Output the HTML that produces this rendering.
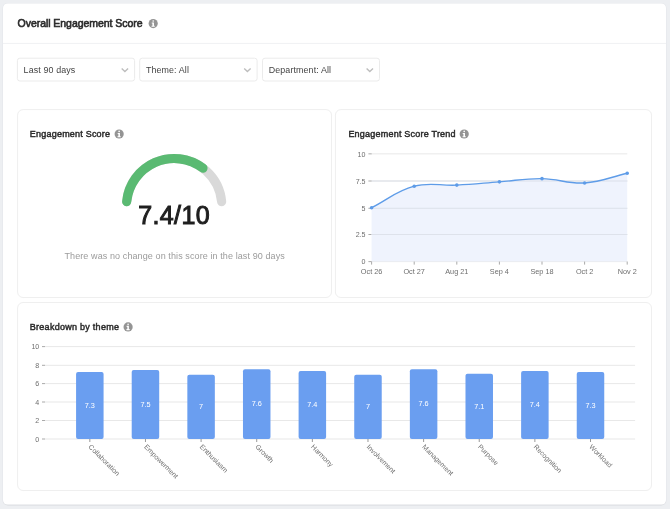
<!DOCTYPE html>
<html><head><meta charset="utf-8"><style>html,body{margin:0;padding:0;background:#edeff2;overflow:hidden}svg{display:block;will-change:transform}</style></head>
<body><svg width="670" height="509" viewBox="0 0 670 509"><rect x="0" y="0" width="670" height="509" fill="#edeff2"/><rect x="2.5" y="3.0" width="664" height="502.5" rx="5" fill="#e4e6ea"/><rect x="3" y="4.3" width="663" height="501.2" rx="5" fill="#dcdee2"/><rect x="3" y="3.5" width="663" height="501" rx="4.5" fill="#fff"/><text x="17.6" y="27.4" font-family='"Liberation Sans", sans-serif' font-size="10.5" letter-spacing="-0.05" fill="#2a2a2a" stroke="#2a2a2a" stroke-width="0.6">Overall Engagement Score</text><circle cx="153.2" cy="23.55" r="4.6" fill="#949494"/><circle cx="153.2" cy="21.00531914893617" r="0.8319148936170211" fill="#fff"/><path d="M151.73191489361702 22.47340425531915 h2.2510638297872334 v3.2297872340425524 h0.7829787234042552 v1.076595744680851 h-3.2297872340425524 v-1.076595744680851 h0.8808510638297872 v-2.153191489361702 h-0.6851063829787233 z" fill="#fff"/><rect x="3" y="42.9" width="663" height="1" fill="#f0f1f3"/><rect x="17.4" y="58.2" width="117.19999999999999" height="22.8" rx="2.5" fill="#fff" stroke="#ebebeb" stroke-width="1"/><text x="23.599999999999998" y="72.9" font-family='"Liberation Sans", sans-serif' font-size="8.9" letter-spacing="0.12" fill="#444">Last 90 days</text><path d="M121.69999999999999 68.6 L124.89999999999999 71.6 L128.1 68.6" fill="none" stroke="#bdbdbd" stroke-width="1.4"/><rect x="139.7" y="58.2" width="117.40000000000003" height="22.8" rx="2.5" fill="#fff" stroke="#ebebeb" stroke-width="1"/><text x="145.89999999999998" y="72.9" font-family='"Liberation Sans", sans-serif' font-size="8.9" letter-spacing="0.12" fill="#444">Theme: All</text><path d="M244.20000000000005 68.6 L247.40000000000003 71.6 L250.60000000000002 68.6" fill="none" stroke="#bdbdbd" stroke-width="1.4"/><rect x="262.5" y="58.2" width="117.0" height="22.8" rx="2.5" fill="#fff" stroke="#ebebeb" stroke-width="1"/><text x="268.7" y="72.9" font-family='"Liberation Sans", sans-serif' font-size="8.9" letter-spacing="0.12" fill="#444">Department: All</text><path d="M366.6 68.6 L369.8 71.6 L373.0 68.6" fill="none" stroke="#bdbdbd" stroke-width="1.4"/><rect x="17.6" y="109.6" width="313.9" height="187.9" rx="5.5" fill="#fff" stroke="#efefef" stroke-width="1"/><rect x="335.4" y="109.6" width="316.1" height="187.9" rx="5.5" fill="#fff" stroke="#efefef" stroke-width="1"/><rect x="17.6" y="302.5" width="633.9" height="188.0" rx="5.5" fill="#fff" stroke="#efefef" stroke-width="1"/><text x="29.85" y="137.4" font-family='"Liberation Sans", sans-serif' font-size="9" letter-spacing="0.21" fill="#2a2a2a" stroke="#2a2a2a" stroke-width="0.45">Engagement Score</text><circle cx="119.15" cy="134" r="4.6" fill="#949494"/><circle cx="119.15" cy="131.45531914893618" r="0.8319148936170211" fill="#fff"/><path d="M117.68191489361703 132.92340425531916 h2.2510638297872334 v3.2297872340425524 h0.7829787234042552 v1.076595744680851 h-3.2297872340425524 v-1.076595744680851 h0.8808510638297872 v-2.153191489361702 h-0.6851063829787233 z" fill="#fff"/><text x="348.4" y="137.4" font-family='"Liberation Sans", sans-serif' font-size="9" letter-spacing="0.22" fill="#2a2a2a" stroke="#2a2a2a" stroke-width="0.45">Engagement Score Trend</text><circle cx="464.2" cy="134" r="4.6" fill="#949494"/><circle cx="464.2" cy="131.45531914893618" r="0.8319148936170211" fill="#fff"/><path d="M462.731914893617 132.92340425531916 h2.2510638297872334 v3.2297872340425524 h0.7829787234042552 v1.076595744680851 h-3.2297872340425524 v-1.076595744680851 h0.8808510638297872 v-2.153191489361702 h-0.6851063829787233 z" fill="#fff"/><text x="29.8" y="330" font-family='"Liberation Sans", sans-serif' font-size="9" letter-spacing="0.27" fill="#2a2a2a" stroke="#2a2a2a" stroke-width="0.45">Breakdown by theme</text><circle cx="128.1" cy="326.9" r="4.6" fill="#949494"/><circle cx="128.1" cy="324.35531914893613" r="0.8319148936170211" fill="#fff"/><path d="M126.63191489361702 325.82340425531913 h2.2510638297872334 v3.2297872340425524 h0.7829787234042552 v1.076595744680851 h-3.2297872340425524 v-1.076595744680851 h0.8808510638297872 v-2.153191489361702 h-0.6851063829787233 z" fill="#fff"/><path d="M126.67 201.63 A47.7 47.7 0 0 1 221.63 201.63" fill="none" stroke="#d9d9d9" stroke-width="9.2" stroke-linecap="round"/><path d="M126.67 201.63 A47.7 47.7 0 0 1 202.98 168.20" fill="none" stroke="#5aba72" stroke-width="9.2" stroke-linecap="round"/><text x="174.1" y="224.4" text-anchor="middle" font-family='"Liberation Sans", sans-serif' font-size="25" letter-spacing="0.35" fill="#1f1f1f" stroke="#1f1f1f" stroke-width="1.0">7.4/10</text><text x="174.7" y="259.1" text-anchor="middle" font-family='"Liberation Sans", sans-serif' font-size="9" letter-spacing="0.1" fill="#9b9b9b">There was no change on this score in the last 90 days</text><rect x="371.6" y="153.35" width="255.70" height="1" fill="#e8e8e8"/><rect x="368.4" y="153.35" width="3.3" height="1" fill="#aaa"/><text x="365.5" y="156.70" text-anchor="end" font-family='"Liberation Sans", sans-serif' font-size="7.1" fill="#6e6e6e">10</text><rect x="371.6" y="180.50" width="255.70" height="1" fill="#e8e8e8"/><rect x="368.4" y="180.50" width="3.3" height="1" fill="#aaa"/><text x="365.5" y="183.85" text-anchor="end" font-family='"Liberation Sans", sans-serif' font-size="7.1" fill="#6e6e6e">7.5</text><rect x="371.6" y="207.80" width="255.70" height="1" fill="#e8e8e8"/><rect x="368.4" y="207.80" width="3.3" height="1" fill="#aaa"/><text x="365.5" y="211.15" text-anchor="end" font-family='"Liberation Sans", sans-serif' font-size="7.1" fill="#6e6e6e">5</text><rect x="371.6" y="234.00" width="255.70" height="1" fill="#e8e8e8"/><rect x="368.4" y="234.00" width="3.3" height="1" fill="#aaa"/><text x="365.5" y="237.35" text-anchor="end" font-family='"Liberation Sans", sans-serif' font-size="7.1" fill="#6e6e6e">2.5</text><rect x="371.6" y="261.10" width="255.70" height="1" fill="#e8e8e8"/><rect x="368.4" y="261.10" width="3.3" height="1" fill="#aaa"/><text x="365.5" y="264.45" text-anchor="end" font-family='"Liberation Sans", sans-serif' font-size="7.1" fill="#6e6e6e">0</text><path d="M371.60 207.73 C388.64 199.11 396.19 190.96 414.20 186.18 C430.27 181.91 439.78 185.96 456.80 185.10 C473.86 184.23 482.36 183.16 499.40 181.87 C516.44 180.57 524.98 178.42 542.00 178.63 C559.06 178.85 567.73 184.01 584.60 182.94 C601.81 181.85 610.16 177.12 627.20 173.25 L627.20 261.60 L371.60 261.60 Z" fill="#edf2fd" fill-opacity="0.9"/><rect x="371.6" y="180.50" width="255.70" height="1" fill="#dadfe8" fill-opacity="0.85"/><rect x="371.6" y="207.80" width="255.70" height="1" fill="#dadfe8" fill-opacity="0.85"/><rect x="371.6" y="234.00" width="255.70" height="1" fill="#dadfe8" fill-opacity="0.85"/><path d="M371.60 207.73 C388.64 199.11 396.19 190.96 414.20 186.18 C430.27 181.91 439.78 185.96 456.80 185.10 C473.86 184.23 482.36 183.16 499.40 181.87 C516.44 180.57 524.98 178.42 542.00 178.63 C559.06 178.85 567.73 184.01 584.60 182.94 C601.81 181.85 610.16 177.12 627.20 173.25" fill="none" stroke="#5e9ce8" stroke-width="1.4"/><circle cx="371.60" cy="207.73" r="1.8" fill="#5e9ce8"/><circle cx="414.20" cy="186.18" r="1.8" fill="#5e9ce8"/><circle cx="456.80" cy="185.10" r="1.8" fill="#5e9ce8"/><circle cx="499.40" cy="181.87" r="1.8" fill="#5e9ce8"/><circle cx="542.00" cy="178.63" r="1.8" fill="#5e9ce8"/><circle cx="584.60" cy="182.94" r="1.8" fill="#5e9ce8"/><circle cx="627.20" cy="173.25" r="1.8" fill="#5e9ce8"/><rect x="371.10" y="261.60" width="1" height="3" fill="#aaa"/><text x="371.60" y="274.3" text-anchor="middle" font-family='"Liberation Sans", sans-serif' font-size="7.3" fill="#6e6e6e">Oct 26</text><rect x="413.70" y="261.60" width="1" height="3" fill="#aaa"/><text x="414.20" y="274.3" text-anchor="middle" font-family='"Liberation Sans", sans-serif' font-size="7.3" fill="#6e6e6e">Oct 27</text><rect x="456.30" y="261.60" width="1" height="3" fill="#aaa"/><text x="456.80" y="274.3" text-anchor="middle" font-family='"Liberation Sans", sans-serif' font-size="7.3" fill="#6e6e6e">Aug 21</text><rect x="498.90" y="261.60" width="1" height="3" fill="#aaa"/><text x="499.40" y="274.3" text-anchor="middle" font-family='"Liberation Sans", sans-serif' font-size="7.3" fill="#6e6e6e">Sep 4</text><rect x="541.50" y="261.60" width="1" height="3" fill="#aaa"/><text x="542.00" y="274.3" text-anchor="middle" font-family='"Liberation Sans", sans-serif' font-size="7.3" fill="#6e6e6e">Sep 18</text><rect x="584.10" y="261.60" width="1" height="3" fill="#aaa"/><text x="584.60" y="274.3" text-anchor="middle" font-family='"Liberation Sans", sans-serif' font-size="7.3" fill="#6e6e6e">Oct 2</text><rect x="626.70" y="261.60" width="1" height="3" fill="#aaa"/><text x="627.20" y="274.3" text-anchor="middle" font-family='"Liberation Sans", sans-serif' font-size="7.3" fill="#6e6e6e">Nov 2</text><rect x="44.8" y="346.10" width="590.30" height="1" fill="#e8e8e8"/><rect x="42" y="346.10" width="3" height="1" fill="#aaa"/><text x="39.3" y="349.45" text-anchor="end" font-family='"Liberation Sans", sans-serif' font-size="7.1" fill="#6e6e6e">10</text><rect x="44.8" y="364.80" width="590.30" height="1" fill="#e8e8e8"/><rect x="42" y="364.80" width="3" height="1" fill="#aaa"/><text x="39.3" y="368.15" text-anchor="end" font-family='"Liberation Sans", sans-serif' font-size="7.1" fill="#6e6e6e">8</text><rect x="44.8" y="383.10" width="590.30" height="1" fill="#e8e8e8"/><rect x="42" y="383.10" width="3" height="1" fill="#aaa"/><text x="39.3" y="386.45" text-anchor="end" font-family='"Liberation Sans", sans-serif' font-size="7.1" fill="#6e6e6e">6</text><rect x="44.8" y="401.50" width="590.30" height="1" fill="#e8e8e8"/><rect x="42" y="401.50" width="3" height="1" fill="#aaa"/><text x="39.3" y="404.85" text-anchor="end" font-family='"Liberation Sans", sans-serif' font-size="7.1" fill="#6e6e6e">4</text><rect x="44.8" y="420.00" width="590.30" height="1" fill="#e8e8e8"/><rect x="42" y="420.00" width="3" height="1" fill="#aaa"/><text x="39.3" y="423.35" text-anchor="end" font-family='"Liberation Sans", sans-serif' font-size="7.1" fill="#6e6e6e">2</text><rect x="44.8" y="438.50" width="590.30" height="1" fill="#e8e8e8"/><rect x="42" y="438.50" width="3" height="1" fill="#aaa"/><text x="39.3" y="441.85" text-anchor="end" font-family='"Liberation Sans", sans-serif' font-size="7.1" fill="#6e6e6e">0</text><rect x="76.08" y="371.95" width="27.5" height="67.05" rx="2" fill="#6a9ef0"/><text x="89.83" y="407.87" text-anchor="middle" font-family='"Liberation Sans", sans-serif' font-size="7.3" fill="#fff">7.3</text><rect x="89.33" y="439.00" width="1" height="3" fill="#999"/><text transform="translate(91.63 443.8) rotate(45)" x="0" y="5" font-family='"Liberation Sans", sans-serif' font-size="6.95" fill="#6e6e6e">Collaboration</text><rect x="131.71" y="370.10" width="27.5" height="68.90" rx="2" fill="#6a9ef0"/><text x="145.46" y="406.95" text-anchor="middle" font-family='"Liberation Sans", sans-serif' font-size="7.3" fill="#fff">7.5</text><rect x="144.96" y="439.00" width="1" height="3" fill="#999"/><text transform="translate(147.26 443.8) rotate(45)" x="0" y="5" font-family='"Liberation Sans", sans-serif' font-size="6.95" fill="#6e6e6e">Empowerment</text><rect x="187.34" y="374.72" width="27.5" height="64.28" rx="2" fill="#6a9ef0"/><text x="201.09" y="409.26" text-anchor="middle" font-family='"Liberation Sans", sans-serif' font-size="7.3" fill="#fff">7</text><rect x="200.59" y="439.00" width="1" height="3" fill="#999"/><text transform="translate(202.89 443.8) rotate(45)" x="0" y="5" font-family='"Liberation Sans", sans-serif' font-size="6.95" fill="#6e6e6e">Enthusiasm</text><rect x="242.97" y="369.18" width="27.5" height="69.82" rx="2" fill="#6a9ef0"/><text x="256.72" y="406.49" text-anchor="middle" font-family='"Liberation Sans", sans-serif' font-size="7.3" fill="#fff">7.6</text><rect x="256.22" y="439.00" width="1" height="3" fill="#999"/><text transform="translate(258.52 443.8) rotate(45)" x="0" y="5" font-family='"Liberation Sans", sans-serif' font-size="6.95" fill="#6e6e6e">Growth</text><rect x="298.60" y="371.02" width="27.5" height="67.98" rx="2" fill="#6a9ef0"/><text x="312.35" y="407.41" text-anchor="middle" font-family='"Liberation Sans", sans-serif' font-size="7.3" fill="#fff">7.4</text><rect x="311.85" y="439.00" width="1" height="3" fill="#999"/><text transform="translate(314.15 443.8) rotate(45)" x="0" y="5" font-family='"Liberation Sans", sans-serif' font-size="6.95" fill="#6e6e6e">Harmony</text><rect x="354.23" y="374.72" width="27.5" height="64.28" rx="2" fill="#6a9ef0"/><text x="367.98" y="409.26" text-anchor="middle" font-family='"Liberation Sans", sans-serif' font-size="7.3" fill="#fff">7</text><rect x="367.48" y="439.00" width="1" height="3" fill="#999"/><text transform="translate(369.78 443.8) rotate(45)" x="0" y="5" font-family='"Liberation Sans", sans-serif' font-size="6.95" fill="#6e6e6e">Involvement</text><rect x="409.86" y="369.18" width="27.5" height="69.82" rx="2" fill="#6a9ef0"/><text x="423.61" y="406.49" text-anchor="middle" font-family='"Liberation Sans", sans-serif' font-size="7.3" fill="#fff">7.6</text><rect x="423.11" y="439.00" width="1" height="3" fill="#999"/><text transform="translate(425.41 443.8) rotate(45)" x="0" y="5" font-family='"Liberation Sans", sans-serif' font-size="6.95" fill="#6e6e6e">Management</text><rect x="465.49" y="373.80" width="27.5" height="65.20" rx="2" fill="#6a9ef0"/><text x="479.24" y="408.80" text-anchor="middle" font-family='"Liberation Sans", sans-serif' font-size="7.3" fill="#fff">7.1</text><rect x="478.74" y="439.00" width="1" height="3" fill="#999"/><text transform="translate(481.04 443.8) rotate(45)" x="0" y="5" font-family='"Liberation Sans", sans-serif' font-size="6.95" fill="#6e6e6e">Purpose</text><rect x="521.12" y="371.02" width="27.5" height="67.98" rx="2" fill="#6a9ef0"/><text x="534.87" y="407.41" text-anchor="middle" font-family='"Liberation Sans", sans-serif' font-size="7.3" fill="#fff">7.4</text><rect x="534.37" y="439.00" width="1" height="3" fill="#999"/><text transform="translate(536.67 443.8) rotate(45)" x="0" y="5" font-family='"Liberation Sans", sans-serif' font-size="6.95" fill="#6e6e6e">Recognition</text><rect x="576.75" y="371.95" width="27.5" height="67.05" rx="2" fill="#6a9ef0"/><text x="590.50" y="407.87" text-anchor="middle" font-family='"Liberation Sans", sans-serif' font-size="7.3" fill="#fff">7.3</text><rect x="590.00" y="439.00" width="1" height="3" fill="#999"/><text transform="translate(592.30 443.8) rotate(45)" x="0" y="5" font-family='"Liberation Sans", sans-serif' font-size="6.95" fill="#6e6e6e">Workload</text></svg></body></html>
